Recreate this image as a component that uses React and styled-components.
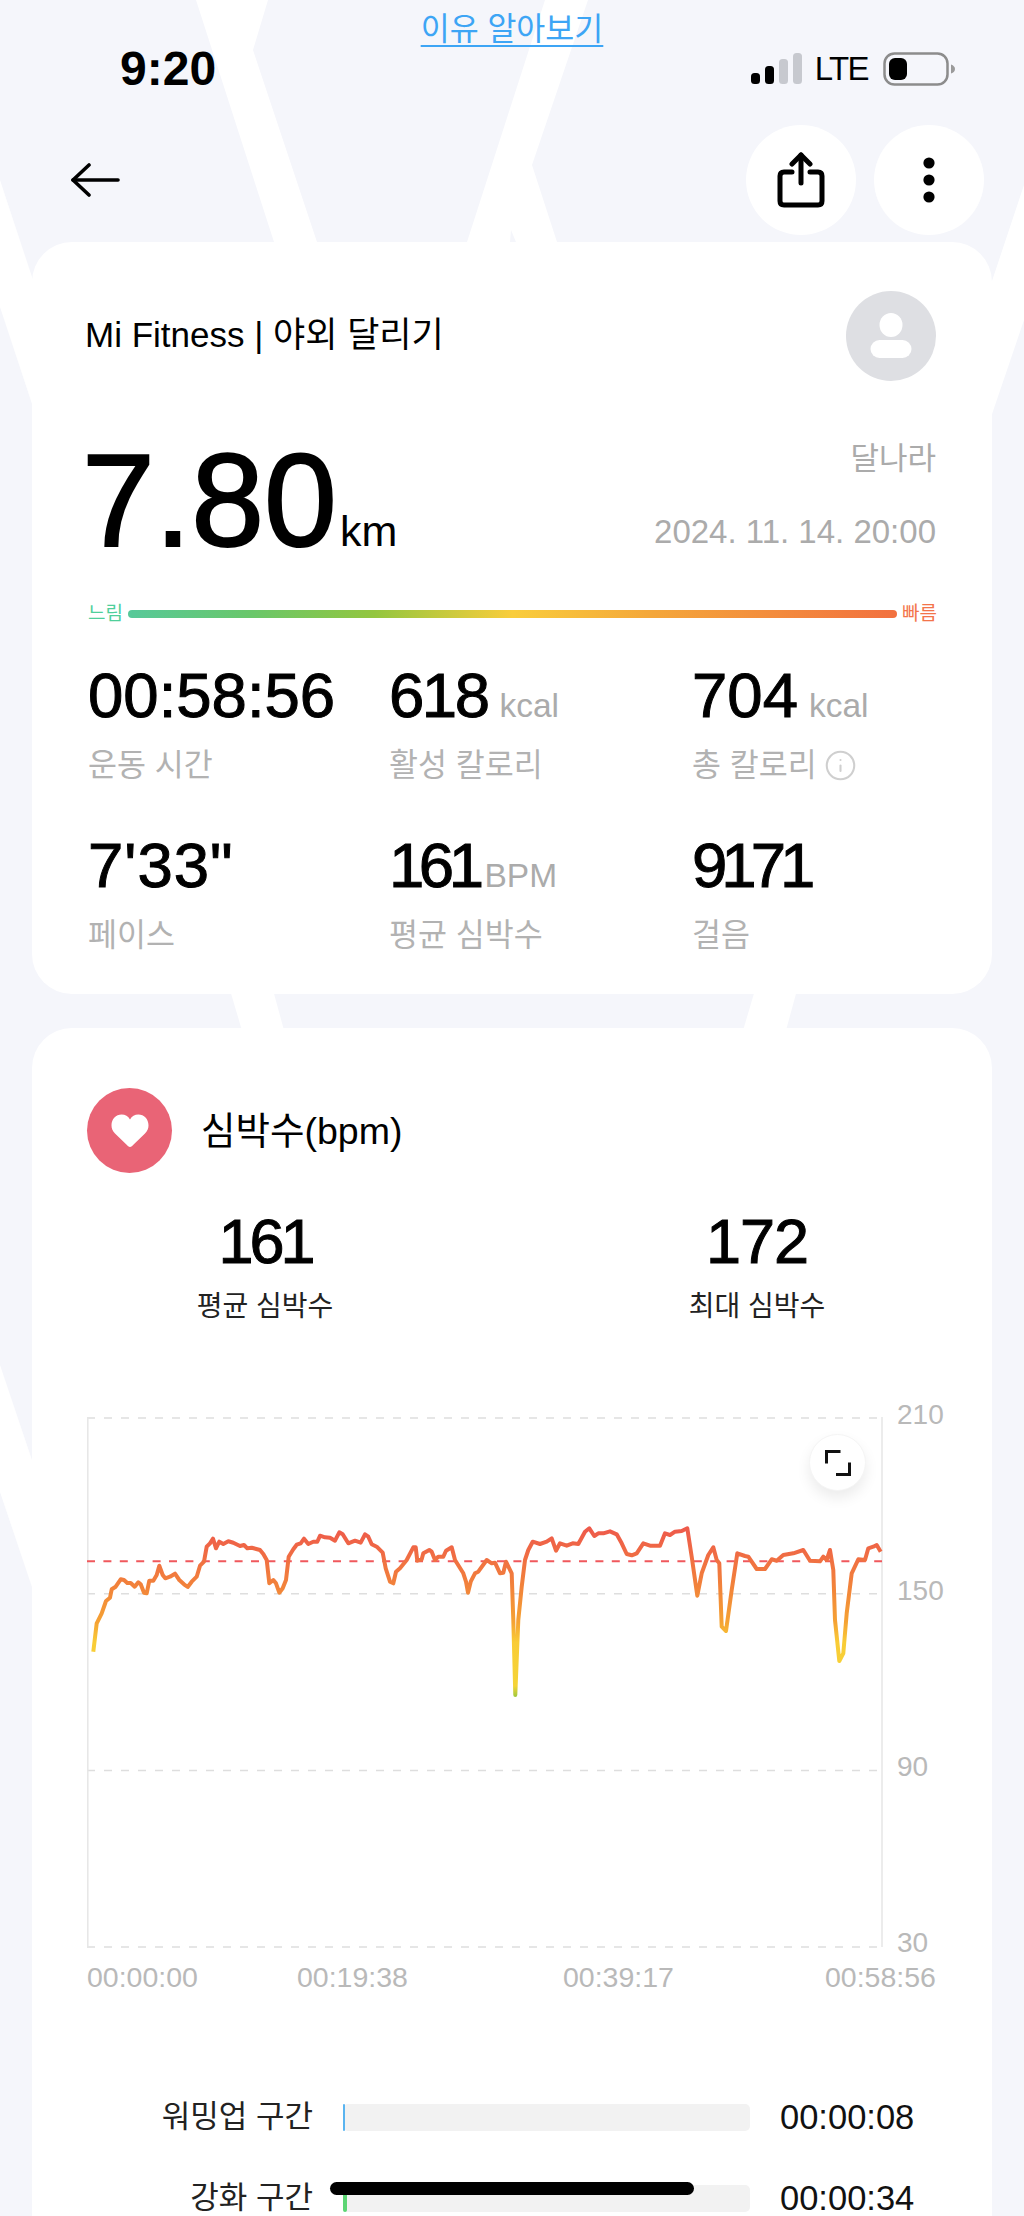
import React from "react";
import styled, { createGlobalStyle } from "styled-components";
import { Info } from "lucide-react";

const GlobalStyle = createGlobalStyle`
  html, body {
    margin: 0;
    padding: 0;
    background: #f5f6fb;
    font-family: "Liberation Sans", "Noto Sans CJK KR", sans-serif;
    color: #000;
  }
`;

const Page = styled.div`
  position: relative;
  width: 1024px;
  height: 2216px;
  overflow: hidden;
  background: #f5f6fb;
`;

const Backdrop = styled.svg`
  position: absolute;
  top: 0;
  left: 0;
`;

const Content = styled.div`
  position: relative;
`;

const TopLink = styled.div`
  box-sizing: border-box;
  height: 46px;
  padding-top: 7px;
  line-height: 44px;
  text-align: center;
  font-size: 31.5px;
  a {
    color: #3da5f5;
    text-decoration: underline;
    text-underline-offset: 5px;
    text-decoration-thickness: 2px;
  }
`;

const StatusBar = styled.div`
  height: 46px;
  padding: 0 69px 0 120px;
  display: flex;
  align-items: center;
  justify-content: space-between;
`;

const Clock = styled.div`
  font-size: 48px;
  line-height: 46px;
  font-weight: 700;
`;

const StatusIcons = styled.div`
  display: flex;
  align-items: center;
`;

const Lte = styled.span`
  margin: 0 15px 0 12px;
  font-size: 33px;
  line-height: 46px;
  letter-spacing: -1.6px;
`;

const Nav = styled.div`
  margin-top: 33px;
  height: 110px;
  padding: 0 40px 0 70px;
  display: flex;
  align-items: center;
  justify-content: space-between;
`;

const NavActions = styled.div`
  display: flex;
  gap: 18px;
`;

const RoundButton = styled.div`
  width: 110px;
  height: 110px;
  border-radius: 50%;
  background: #fff;
  display: flex;
  align-items: center;
  justify-content: center;
`;

const Card = styled.section`
  margin: ${(p) => p.$top}px 32px 0;
  border-radius: 40px;
  background: #fff;
`;

const SummaryCard = styled(Card)`
  padding: 49px 56px 39px 53px;
`;

const HeartCard = styled(Card)`
  padding: 60px 0 60px 55px;
`;

const CardHeader = styled.div`
  display: flex;
  align-items: center;
  justify-content: space-between;
`;

const SourceTitle = styled.div`
  font-size: 35px;
  line-height: 44px;
  margin-top: -2px;
`;

const Avatar = styled.div`
  width: 90px;
  height: 90px;
  border-radius: 50%;
  background: #dedfe3;
  display: flex;
  align-items: center;
  justify-content: center;
`;

const DistanceRow = styled.div`
  margin-top: 56px;
  height: 128px;
  display: flex;
  justify-content: space-between;
`;

const Distance = styled.div`
  display: flex;
  align-items: baseline;
  margin-left: -3px;
  font-size: 131px;
  line-height: 128px;
  -webkit-text-stroke: 2px #000;
`;

const DistanceUnit = styled.span`
  margin-left: 3px;
  font-size: 43px;
  line-height: 1;
  -webkit-text-stroke: 0;
`;

const Meta = styled.div`
  display: flex;
  flex-direction: column;
  align-items: flex-end;
  gap: 29px;
  font-size: 31px;
  line-height: 44px;
  color: #ababab;
`;

const MetaDate = styled.div`
  font-size: 33px;
`;

const SpeedRow = styled.div`
  margin: 37px -1px 0 3px;
  height: 24px;
  display: flex;
  align-items: center;
  gap: 5px;
`;

const SpeedLabel = styled.span`
  font-size: 19px;
  line-height: 24px;
  color: ${(p) => p.$color};
`;

const SpeedBar = styled.div`
  flex: 1;
  height: 8px;
  border-radius: 4px;
  background: linear-gradient(90deg, #57c99a 0%, #69c76a 16%, #93c63f 32%, #f9cd3c 50%, #f4a73a 68%, #f2703f 100%);
`;

const StatGrid = styled.div`
  margin-top: 39px;
  display: grid;
  grid-template-columns: 301px 303px 301px;
  row-gap: 50px;
`;

const Stat = styled.div`
  display: flex;
  flex-direction: column;
  gap: 20px;
`;

const StatValue = styled.div`
  display: flex;
  align-items: baseline;
  padding-left: 3px;
  font-size: 63.5px;
  line-height: 60px;
  -webkit-text-stroke: 1px #000;
`;

const Digits = styled.span`
  letter-spacing: ${(p) => p.$track || 0}px;
`;

const StatUnit = styled.span`
  margin-left: ${(p) => p.$gap}px;
  font-size: 33.5px;
  line-height: 1;
  color: #ababab;
  -webkit-text-stroke: 0;
`;

const StatLabel = styled.div`
  display: flex;
  align-items: center;
  gap: 7px;
  padding-left: 3px;
  font-size: 31.5px;
  line-height: 40px;
  color: #b2b2b2;
`;

const HeartHeader = styled.div`
  display: flex;
  align-items: center;
  gap: 29px;
`;

const HeartBadge = styled.div`
  width: 85px;
  height: 85px;
  border-radius: 50%;
  background: #e96476;
  display: flex;
  align-items: center;
  justify-content: center;
`;

const HeartTitle = styled.div`
  font-size: 37.5px;
  line-height: 44px;
`;

const Summary = styled.div`
  margin-top: 38px;
  padding-left: 28px;
  display: flex;
  gap: 192px;
`;

const SummaryItem = styled.div`
  width: 300px;
  display: flex;
  flex-direction: column;
  align-items: center;
  gap: 16px;
`;

const SummaryValue = styled.div`
  font-size: 63px;
  line-height: 60px;
  -webkit-text-stroke: 1px #000;
`;

const SummaryLabel = styled.div`
  font-size: 28px;
  line-height: 40px;
  color: #222;
`;

const ChartRow = styled.div`
  margin-top: 90px;
  display: flex;
  align-items: flex-start;
`;

const Plot = styled.div`
  position: relative;
  width: 796px;
  height: 531px;
`;

const ExpandButton = styled.div`
  position: absolute;
  top: 17px;
  right: 17px;
  width: 57px;
  height: 57px;
  box-sizing: border-box;
  border: 1px solid #f5f5f5;
  border-radius: 50%;
  background: #fff;
  box-shadow: 0 7px 14px rgba(0, 0, 0, 0.08);
  display: flex;
  align-items: center;
  justify-content: center;
`;

const YAxis = styled.div`
  margin: -17px 0 0 14px;
  height: 558px;
  display: flex;
  flex-direction: column;
  justify-content: space-between;
  font-size: 28px;
  line-height: 30px;
  color: #b9b9b9;
`;

const XAxis = styled.div`
  margin-top: 4px;
  display: grid;
  grid-template-columns: 210px 266px 262px auto;
  font-size: 28.5px;
  line-height: 30px;
  color: #b9b9b9;
`;

const Zones = styled.div`
  margin-top: 105px;
  display: flex;
  flex-direction: column;
  gap: 41px;
`;

const ZoneRow = styled.div`
  height: 40px;
  display: grid;
  grid-template-columns: 226px 407px auto;
  column-gap: 30px;
  align-items: center;
`;

const ZoneName = styled.div`
  text-align: right;
  font-size: 31px;
  line-height: 40px;
  color: #222;
`;

const ZoneTrack = styled.div`
  position: relative;
  height: 27px;
  border-radius: 5px;
  background: #f2f2f2;
`;

const ZoneFill = styled.div`
  width: ${(p) => p.$width}px;
  height: 100%;
  border-radius: 2px;
  background: ${(p) => p.$color};
`;

const ZoneValue = styled.div`
  font-size: 34.5px;
  line-height: 40px;
  color: #111;
`;

const Redaction = styled.div`
  position: absolute;
  top: -3px;
  left: -13px;
  width: 364px;
  height: 13px;
  border-radius: 7px;
  background: #000;
`;

// traced off the reference: x,y in px of the plot * 3, so the spikes stay easy to adjust
const HEART_RATE = [
  [100, 755], [110, 670], [125, 640], [138, 603], [150, 593], [155, 568], [167, 560], [182, 538], [192, 540], [202, 549],
  [212, 549], [224, 560], [235, 547], [242, 553], [252, 578], [260, 580], [268, 542], [280, 542], [290, 525], [298, 497],
  [308, 525], [316, 535], [330, 530], [345, 521], [358, 540], [372, 553], [383, 561], [395, 545], [410, 530], [420, 497],
  [432, 485], [440, 440], [450, 430], [459, 416], [468, 445], [478, 425], [490, 432], [505, 424], [520, 428], [540, 438],
  [552, 435], [562, 445], [575, 443], [600, 450], [610, 462], [620, 480], [628, 550], [640, 540], [648, 550], [658, 578],
  [668, 565], [678, 540], [686, 470], [700, 448], [710, 434], [722, 430], [732, 416], [745, 432], [760, 425], [772, 425],
  [780, 407], [795, 412], [810, 413], [825, 422], [838, 397], [848, 403], [865, 430], [885, 422], [902, 428], [915, 403],
  [925, 410], [935, 433], [950, 440], [968, 458], [977, 505], [990, 545], [1000, 550], [1008, 515], [1020, 505], [1040, 480],
  [1060, 442], [1067, 442], [1072, 482], [1085, 478], [1090, 460], [1108, 450], [1115, 455], [1125, 480], [1135, 470], [1150, 470],
  [1158, 452], [1175, 442], [1185, 480], [1210, 520], [1218, 545], [1224, 578], [1232, 545], [1245, 520], [1255, 515], [1280, 480],
  [1295, 490], [1305, 488], [1320, 520], [1330, 518], [1338, 485], [1355, 520], [1360, 660], [1366, 885], [1375, 660], [1385, 560],
  [1395, 480], [1405, 450], [1418, 425], [1440, 432], [1460, 425], [1475, 415], [1488, 452], [1500, 430], [1520, 437], [1538, 430],
  [1555, 432], [1575, 395], [1588, 385], [1603, 408], [1615, 400], [1630, 400], [1650, 394], [1670, 403], [1685, 430], [1700, 462],
  [1715, 466], [1730, 460], [1750, 430], [1770, 437], [1800, 437], [1815, 400], [1830, 405], [1845, 395], [1865, 393], [1882, 385],
  [1895, 470], [1912, 587], [1925, 520], [1945, 465], [1960, 442], [1970, 480], [1978, 490], [1985, 680], [1998, 693], [2015, 570],
  [2032, 460], [2055, 468], [2065, 470], [2090, 507], [2115, 507], [2135, 478], [2150, 482], [2170, 465], [2200, 460], [2230, 450],
  [2250, 482], [2280, 484], [2290, 470], [2300, 480], [2310, 450], [2320, 510], [2325, 660], [2338, 783], [2350, 760], [2360, 640],
  [2375, 520], [2395, 478], [2415, 480], [2425, 445], [2440, 440], [2450, 435], [2462, 455],
];

const heartPoints = HEART_RATE.map(([x, y]) => `${(x / 3 - 27).toFixed(1)},${(y / 3 - 17).toFixed(1)}`).join(" ");

// track: the reference font has a narrow "1", Liberation digits are all one width
const STATS = [
  { value: "00:58:56", label: "운동 시간" },
  { value: "618", track: -2.5, unit: "kcal", gap: 12, label: "활성 칼로리" },
  { value: "704", unit: "kcal", gap: 11, label: "총 칼로리", info: true },
  { value: "7'33\"", track: 1, label: "페이스" },
  { value: "161", track: -5.5, unit: "BPM", gap: 6, label: "평균 심박수" },
  { value: "9171", track: -6, label: "걸음" },
];

const BackdropArt = () => (
  <Backdrop width="1024" height="2216" fill="#fff">
    <polygon points="196,0 268,0 253,50 317,242 274,242" />
    <polygon points="545,0 588,0 532,165 557,242 516,242 511,230 510,242 467,242" />
    <polygon points="0,180 34,283 34,410 0,307" />
    <polygon points="1024,185 990,287 990,420 1024,320" />
    <polygon points="230,990 273,990 285,1034 243,1034" />
    <polygon points="755,990 797,990 785,1034 742,1034" />
    <polygon points="0,1365 34,1466 34,1593 0,1492" />
  </Backdrop>
);

const SignalIcon = () => (
  <svg width="52" height="32" viewBox="0 0 52 32">
    <rect x="0" y="20" width="9" height="11" rx="3.5" fill="#000" />
    <rect x="14" y="13" width="9" height="18" rx="3.5" fill="#000" />
    <rect x="28" y="6" width="9" height="25" rx="3.5" fill="#c7c9cf" />
    <rect x="42" y="0" width="9" height="31" rx="3.5" fill="#c7c9cf" />
  </svg>
);

const BatteryIcon = () => (
  <svg width="72" height="34" viewBox="0 0 72 34">
    <rect x="1.5" y="1.5" width="63" height="31" rx="10" fill="none" stroke="#8c8c8c" strokeWidth="2.5" />
    <rect x="6" y="6" width="18" height="22" rx="6" fill="#000" />
    <path d="M68 12.5 Q72 14 72 17 Q72 20 68 21.5 Z" fill="#9a9a9a" />
  </svg>
);

const BackIcon = () => (
  <svg width="50" height="34" viewBox="0 0 50 34" fill="none" stroke="#000" strokeWidth="3.6" strokeLinecap="round" strokeLinejoin="round">
    <path d="M3 17 H48" />
    <path d="M19 2 L3 17 L19 32" />
  </svg>
);

const ShareIcon = () => (
  <svg width="48" height="56" viewBox="0 0 48 56" fill="none" stroke="#000" strokeWidth="5" strokeLinecap="round" strokeLinejoin="round">
    <path d="M24 31 V3" />
    <path d="M15 12 L24 3 L33 12" />
    <path d="M15 20 H7 Q3 20 3 24 V49 Q3 53 7 53 H41 Q45 53 45 49 V24 Q45 20 41 20 H33" />
  </svg>
);

const DotsIcon = () => (
  <svg width="12" height="46" viewBox="0 0 12 46" fill="#000">
    <circle cx="6" cy="6" r="5.6" />
    <circle cx="6" cy="23" r="5.6" />
    <circle cx="6" cy="40" r="5.6" />
  </svg>
);

const PersonIcon = () => (
  <svg width="42" height="46" viewBox="0 0 42 46" fill="#fff">
    <ellipse cx="21" cy="12" rx="11.5" ry="12" />
    <rect x="0.5" y="27" width="41" height="18" rx="9" />
  </svg>
);

const HeartIcon = () => (
  <svg width="38" height="34" viewBox="0 0 38 34" fill="#fff">
    <path d="M19 33 C17.6 33 16.8 32 15.4 30.6 L4 19.4 C1.4 16.8 0.5 14.4 0.5 11.2 C0.5 5.2 5 0.6 10.6 0.6 C14.2 0.6 17.2 2.4 19 5.4 C20.8 2.4 23.8 0.6 27.4 0.6 C33 0.6 37.5 5.2 37.5 11.2 C37.5 14.4 36.6 16.8 34 19.4 L22.6 30.6 C21.2 32 20.4 33 19 33 Z" />
  </svg>
);

const ExpandIcon = () => (
  <svg width="28" height="28" viewBox="0 0 28 28" fill="none" stroke="#111" strokeWidth="3" strokeLinecap="square">
    <path d="M2.5 13 V2.5 H15" />
    <path d="M25.5 15 V25.5 H13.5" />
  </svg>
);

const HeartChart = () => (
  <svg width="796" height="531" viewBox="0 0 796 531">
    <defs>
      <linearGradient id="rate" gradientUnits="userSpaceOnUse" x1="0" y1="111" x2="0" y2="279">
        <stop offset="0" stopColor="#ee5a4b" />
        <stop offset="0.36" stopColor="#f2843a" />
        <stop offset="0.56" stopColor="#f5a233" />
        <stop offset="0.68" stopColor="#f9cc36" />
        <stop offset="0.94" stopColor="#f5d437" />
        <stop offset="1" stopColor="#a5c93c" />
      </linearGradient>
    </defs>
    <g stroke="#dedede" strokeWidth="1.5" strokeDasharray="8 9" fill="none">
      <path d="M0 1 H795" />
      <path d="M0 176.7 H795" />
      <path d="M0 353.4 H795" />
      <path d="M0 530 H795" />
    </g>
    <path d="M0.8 0 V530 M795 0 V530" stroke="#e6e6e6" strokeWidth="1.5" fill="none" />
    <path d="M0 144.3 H795" stroke="#f0585c" strokeWidth="2" strokeDasharray="8 8.4" fill="none" />
    <polyline points={heartPoints} fill="none" stroke="url(#rate)" strokeWidth="4" strokeLinejoin="round" />
  </svg>
);

export default function App() {
  return (
    <Page>
      <GlobalStyle />
      <BackdropArt />
      <Content>
        <TopLink>
          <a href="#why">이유 알아보기</a>
        </TopLink>
        <StatusBar>
          <Clock>9:20</Clock>
          <StatusIcons>
            <SignalIcon />
            <Lte>LTE</Lte>
            <BatteryIcon />
          </StatusIcons>
        </StatusBar>
        <Nav>
          <BackIcon />
          <NavActions>
            <RoundButton>
              <ShareIcon />
            </RoundButton>
            <RoundButton>
              <DotsIcon />
            </RoundButton>
          </NavActions>
        </Nav>

        <SummaryCard $top={7}>
          <CardHeader>
            <SourceTitle>Mi Fitness | 야외 달리기</SourceTitle>
            <Avatar>
              <PersonIcon />
            </Avatar>
          </CardHeader>
          <DistanceRow>
            <Distance>
              7.80<DistanceUnit>km</DistanceUnit>
            </Distance>
            <Meta>
              <div>달나라</div>
              <MetaDate>2024. 11. 14. 20:00</MetaDate>
            </Meta>
          </DistanceRow>
          <SpeedRow>
            <SpeedLabel $color="#4fcf9b">느림</SpeedLabel>
            <SpeedBar />
            <SpeedLabel $color="#f3744a">빠름</SpeedLabel>
          </SpeedRow>
          <StatGrid>
            {STATS.map((stat) => (
              <Stat key={stat.label}>
                <StatValue>
                  <Digits $track={stat.track}>{stat.value}</Digits>
                  {stat.unit && <StatUnit $gap={stat.gap}>{stat.unit}</StatUnit>}
                </StatValue>
                <StatLabel>
                  {stat.label}
                  {stat.info && <Info size={33} color="#cfcfcf" strokeWidth={1.5} />}
                </StatLabel>
              </Stat>
            ))}
          </StatGrid>
        </SummaryCard>

        <HeartCard $top={34}>
          <HeartHeader>
            <HeartBadge>
              <HeartIcon />
            </HeartBadge>
            <HeartTitle>심박수(bpm)</HeartTitle>
          </HeartHeader>
          <Summary>
            <SummaryItem>
              <SummaryValue>
                <Digits $track={-4}>161</Digits>
              </SummaryValue>
              <SummaryLabel>평균 심박수</SummaryLabel>
            </SummaryItem>
            <SummaryItem>
              <SummaryValue>
                <Digits $track={-1}>172</Digits>
              </SummaryValue>
              <SummaryLabel>최대 심박수</SummaryLabel>
            </SummaryItem>
          </Summary>
          <ChartRow>
            <Plot>
              <HeartChart />
              <ExpandButton>
                <ExpandIcon />
              </ExpandButton>
            </Plot>
            <YAxis>
              <span>210</span>
              <span>150</span>
              <span>90</span>
              <span>30</span>
            </YAxis>
          </ChartRow>
          <XAxis>
            <span>00:00:00</span>
            <span>00:19:38</span>
            <span>00:39:17</span>
            <span>00:58:56</span>
          </XAxis>
          <Zones>
            <ZoneRow>
              <ZoneName>워밍업 구간</ZoneName>
              <ZoneTrack>
                <ZoneFill $width={2} $color="#5ab4f0" />
              </ZoneTrack>
              <ZoneValue>00:00:08</ZoneValue>
            </ZoneRow>
            <ZoneRow>
              <ZoneName>강화 구간</ZoneName>
              <ZoneTrack>
                <ZoneFill $width={4} $color="#5dd574" />
                <Redaction />
              </ZoneTrack>
              <ZoneValue>00:00:34</ZoneValue>
            </ZoneRow>
          </Zones>
        </HeartCard>
      </Content>
    </Page>
  );
}
